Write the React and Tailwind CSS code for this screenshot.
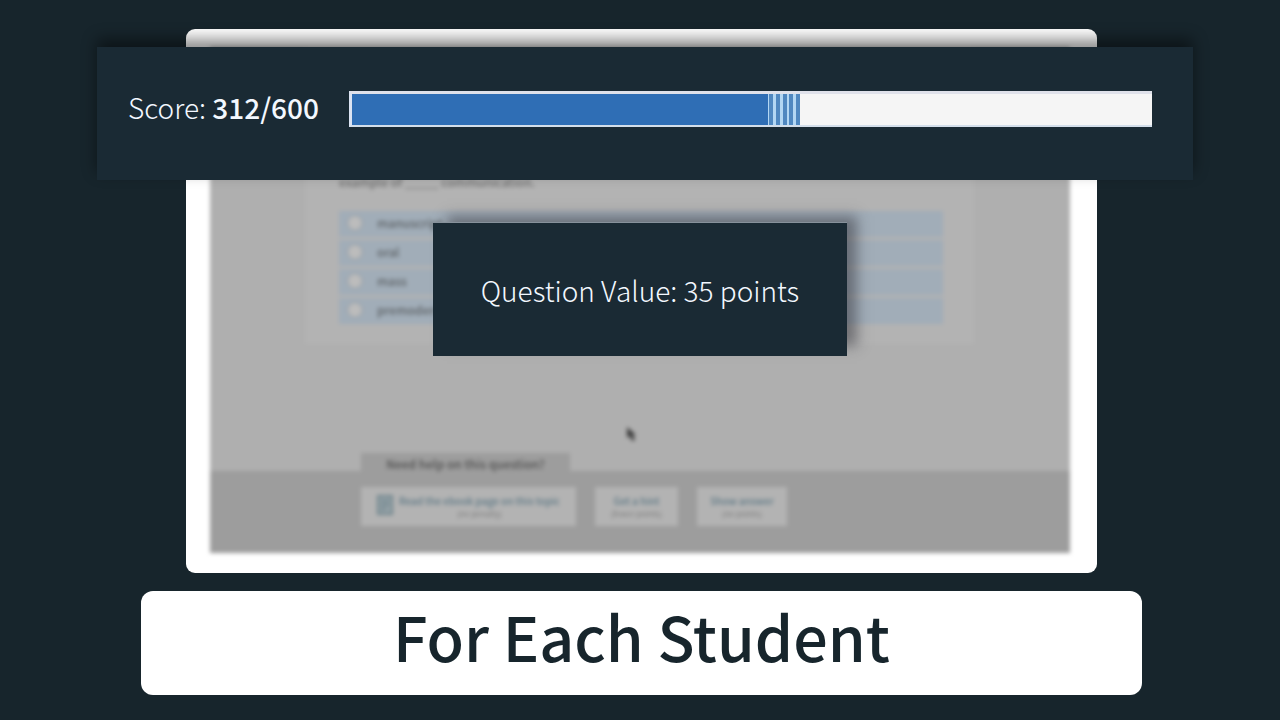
import React from 'react';

const SCORE = 312;
const TOTAL = 600;
const QUESTION_VALUE = 35;

const answers = ['manuscript', 'oral', 'mass', 'premodern'];

const helpActions = [
    { label: 'Get a hint', note: '(fewer points)', width: 'w-[83px]' },
    { label: 'Show answer', note: '(no points)', width: 'w-[90px]' },
];

// Score panel with the progress bar
const ScorePanel = () => (
    <section className="absolute inset-x-0 top-[18px] flex h-[133px] items-start bg-[#1a2a34] pt-11 pr-[41px] pl-[31px] shadow-[0_-8px_14px_0_rgba(0,0,0,0.45)]">
        <p className="mr-[31px] w-[190px] text-[28px] leading-8 font-light whitespace-nowrap text-[#f3f8ff]">
            Score: <span className="font-medium">{SCORE}/{TOTAL}</span>
        </p>
        <div
            role="progressbar"
            aria-label="Score"
            aria-valuenow={SCORE}
            aria-valuemin={0}
            aria-valuemax={TOTAL}
            className="flex h-9 flex-1 border-t-3 border-b-2 border-l-3 border-t-[#dfe1ea] border-b-[#d3deea] border-l-[#dbe3f2] bg-[#f5f5f5]"
        >
            <div className="bg-[#2f6eb5]" style={{ width: `${(SCORE / TOTAL) * 100}%` }} />
            {/* Points still at stake */}
            <div className="flex w-8 justify-between bg-[#b3d7f3] pl-px">
                {[0, 1, 2, 3, 4].map((bar) => (
                    <span key={bar} className="w-1 bg-[#5088c0]" />
                ))}
            </div>
        </div>
    </section>
);

// Answer list of the quiz page
const QuestionCard = () => (
    <form className="mr-24 ml-[95px] h-[297px] bg-[#b3b3b3] pt-[125px] pr-[31px] pl-[34px]">
        <p className="text-[12px] leading-5 font-medium text-[#707070]">example of _____ communication.</p>
        <div className="mt-[19px] flex flex-col gap-[3px]">
            {answers.map((answer) => (
                <label key={answer} className="flex h-[26px] items-center gap-3.5 bg-[#a1adb8] pb-0.5 pl-2 text-[12px] font-medium text-[#5d6266]">
                    <input type="radio" name="answer" className="size-4 appearance-none rounded-full border border-[#929ba3] bg-[#bcbcbc]" />
                    {answer}
                </label>
            ))}
        </div>
    </form>
);

const PageIcon = () => (
    <svg viewBox="0 0 16 20" className="mb-1 h-5 w-4 shrink-0" fill="none" stroke="#6f848c" strokeWidth="2" aria-hidden="true">
        <rect x="1" y="1" width="14" height="18" fill="#97a3a8" />
        <path d="M4 6H12M4 10H12M4 14H9" />
    </svg>
);

const ActionText = ({ label, note }) => (
    <span className="block text-center whitespace-nowrap">
        <span className="block text-[10px] leading-[14px] font-medium text-[#5d7885]">{label}</span>
        <span className="block text-[8px] leading-3 text-[#7c7c7c]">{note}</span>
    </span>
);

const HelpBar = () => (
    <div className="mt-[109px]">
        <h2 className="ml-[151px] flex h-[18px] w-[209px] items-center justify-center bg-[#9d9d9d] pt-1 text-[12px] font-medium text-[#4f4f4f]">
            Need help on this question?
        </h2>
        <div className="flex gap-[19px] bg-[#9d9d9d] pt-4 pb-[27px] pl-[151px]">
            <button type="button" className="flex h-[39px] w-[215px] items-center justify-center gap-1.5 bg-[#b3b3b3]">
                <PageIcon />
                <ActionText label="Read the ebook page on this topic" note="(no penalty)" />
            </button>
            {helpActions.map(({ label, note, width }) => (
                <button key={label} type="button" className={`h-[39px] bg-[#b3b3b3] ${width}`}>
                    <ActionText label={label} note={note} />
                </button>
            ))}
        </div>
    </div>
);

// Mouse pointer resting on the quiz page
const Pointer = () => (
    <svg viewBox="0 0 10 15" className="absolute top-[380px] left-[417px] h-[15px] w-2.5" aria-hidden="true">
        <path d="M0 0 L0 11 L3 9 L5 14 L8 13 L6 8 L9 8 Z" fill="#3c3c3c" />
    </svg>
);

const App = () => (
    <main className="min-h-screen bg-[#17252c] pt-[29px] pr-[87px] pb-[25px] pl-[97px] font-['Noto_Sans_CJK_SC',sans-serif]">
        <div className="relative">
            <div className="mr-24 ml-[89px] rounded-[9px] bg-white pt-[18px] pr-[27px] pb-5 pl-6">
                <div className="relative">
                    <div className="relative overflow-hidden bg-[#afafaf] blur-[2px]">
                        <QuestionCard />
                        <HelpBar />
                        <Pointer />
                    </div>
                    <div className="absolute top-[175px] left-1/2 flex h-[134px] w-[414px] -translate-x-1/2 items-center justify-center border-t border-[#87919b] bg-[#1a2a34] shadow-[12px_-8px_12px_-2px_rgba(50,50,58,0.5)]">
                        <p className="text-[28px] leading-9 font-light whitespace-nowrap text-[#f3f8ff]">
                            Question Value: {QUESTION_VALUE} points
                        </p>
                    </div>
                </div>
            </div>
            <ScorePanel />
        </div>
        <div className="mt-[18px] mr-[51px] ml-11 flex h-[104px] items-center justify-center rounded-xl bg-white pb-4">
            <h1 className="text-[61px] leading-none font-medium text-[#17252c]">For Each Student</h1>
        </div>
    </main>
);

export default App;
